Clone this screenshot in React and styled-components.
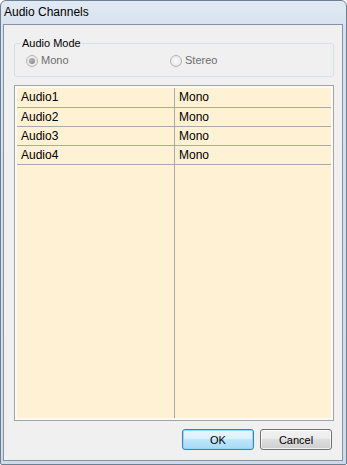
import React from "react";
import styled, { createGlobalStyle } from "styled-components";

const GlobalStyle = createGlobalStyle`
  html, body {
    margin: 0;
    padding: 0;
    background: #ffffff;
  }
  body {
    font-family: "Liberation Sans", Arial, sans-serif;
  }
  * {
    box-sizing: border-box;
  }
`;

const Window = styled.div`
  width: 347px;
  height: 465px;
  display: flex;
  flex-direction: column;
  border: 1px solid #6f7f92;
  border-radius: 6px 6px 2px 2px;
  padding: 0 3px 3px 2px;
  background: linear-gradient(#e1eaf4, #d6e1ed 30px, #cfdbe8);
`;

const TitleBar = styled.div`
  height: 23px;
  line-height: 23px;
  padding-left: 1px;
  font-size: 12px;
  color: #000;
  white-space: nowrap;
`;

const Client = styled.div`
  flex: 1;
  display: flex;
  flex-direction: column;
  border: 1px solid #8593a4;
  background: #f0f0f0;
  padding: 11px 8px 10px 10px;
`;

const GroupBox = styled.fieldset`
  margin: 0;
  height: 41px;
  padding: 4px 0 0 11px;
  border: 1px solid #d5dfe5;
  border-radius: 3px;
  font-size: 11px;
`;

const Legend = styled.legend`
  margin-left: -5px;
  padding: 0 1px;
  line-height: 14px;
  color: #000;
`;

const RadioRow = styled.div`
  display: flex;
  align-items: center;
  height: 13px;
`;

const RadioOption = styled.label`
  display: flex;
  align-items: center;
  gap: 3px;
  width: ${(p) => p.$width || "auto"};
  color: #6d6d6d;
  line-height: 13px;
`;

const RadioMark = styled.span`
  position: relative;
  width: 12px;
  height: 12px;
  border-radius: 50%;
  border: 1px solid #b4b4b4;
  background: radial-gradient(circle at 50% 45%, #f9f9f9, #e4e4e4);

  &::after {
    content: "";
    display: ${(p) => (p.$checked ? "block" : "none")};
    position: absolute;
    left: 2px;
    top: 2px;
    width: 6px;
    height: 6px;
    border-radius: 50%;
    background: radial-gradient(circle at 40% 35%, #b8b8b8, #7e7e7e);
  }
`;

const ListBox = styled.div`
  flex: 1;
  margin-top: 8px;
  border: 1px solid #a3a3a3;
  padding: 2px;
  background: #fafafa;
  display: flex;
`;

const Grid = styled.div`
  flex: 1;
  display: grid;
  grid-template-columns: 158px 1fr;
  grid-template-rows: 20px 19px 19px 19px 1fr;
  background: #fff1d4;
`;

const Cell = styled.div`
  font-size: 12px;
  color: #000;
  line-height: 19px;
  padding-left: 4px;
  border-bottom: ${(p) => (p.$filler ? "none" : "1px solid #a9a9a9")};
  border-right: ${(p) => (p.$first ? "1px solid #a9a9a9" : "none")};
  white-space: nowrap;
`;

const ButtonRow = styled.div`
  display: flex;
  justify-content: flex-end;
  gap: 6px;
  margin: 8px 2px 0 0;
`;

const Button = styled.button`
  width: 72px;
  height: 21px;
  padding: 0;
  font-family: "Liberation Sans", Arial, sans-serif;
  font-size: 11px;
  color: #000;
  border-radius: 3px;
  border: 1px solid ${(p) => (p.$default ? "#3c7fb1" : "#707070")};
  background: ${(p) =>
    p.$default
      ? "linear-gradient(#eaf6fd 0%, #d9f0fc 50%, #bee6fd 50%, #a7d9f5 100%)"
      : "linear-gradient(#f2f2f2 0%, #ebebeb 50%, #dddddd 50%, #cfcfcf 100%)"};
  box-shadow: inset 0 0 0 1px
    ${(p) => (p.$default ? "#8fdcf9" : "rgba(255, 255, 255, 0.75)")};
`;

const channels = [
  { name: "Audio1", mode: "Mono" },
  { name: "Audio2", mode: "Mono" },
  { name: "Audio3", mode: "Mono" },
  { name: "Audio4", mode: "Mono" },
];

export default function App() {
  return (
    <>
      <GlobalStyle />
      <Window>
        <TitleBar>Audio Channels</TitleBar>
        <Client>
          <GroupBox>
            <Legend>Audio Mode</Legend>
            <RadioRow>
              <RadioOption $width="144px">
                <RadioMark $checked />
                Mono
              </RadioOption>
              <RadioOption>
                <RadioMark />
                Stereo
              </RadioOption>
            </RadioRow>
          </GroupBox>
          <ListBox>
            <Grid>
              {channels.map((c) => (
                <React.Fragment key={c.name}>
                  <Cell $first>{c.name}</Cell>
                  <Cell>{c.mode}</Cell>
                </React.Fragment>
              ))}
              <Cell $first $filler />
              <Cell $filler />
            </Grid>
          </ListBox>
          <ButtonRow>
            <Button $default>OK</Button>
            <Button>Cancel</Button>
          </ButtonRow>
        </Client>
      </Window>
    </>
  );
}
